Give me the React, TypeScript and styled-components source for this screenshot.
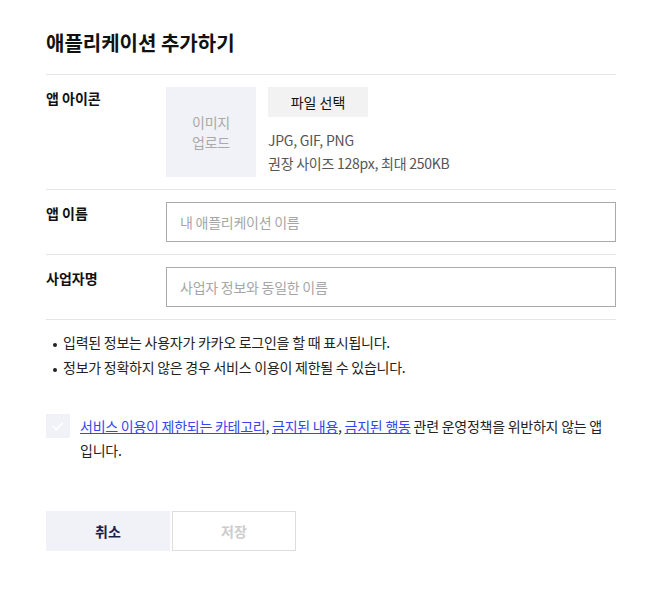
import * as React from "react"
import styled, { createGlobalStyle } from "styled-components"

const GlobalStyle = createGlobalStyle`
  body {
    margin: 0;
    background: #ffffff;
    font-family: "Noto Sans CJK KR", "Noto Sans", sans-serif;
    color: #222222;
    letter-spacing: -0.25px;
  }
`

const App = () => (
  <Wrapper>
    <GlobalStyle />
    <Title>애플리케이션 추가하기</Title>
    <Row>
      <Label>앱 아이콘</Label>
      <IconField>
        <ImageBox>
          이미지
          <br />
          업로드
        </ImageBox>
        <FileInfo>
          <FileButton>파일 선택</FileButton>
          <Hint>
            JPG, GIF, PNG
            <br />
            권장 사이즈 128px, 최대 250KB
          </Hint>
        </FileInfo>
      </IconField>
    </Row>
    <Row>
      <Label>앱 이름</Label>
      <TextInput placeholder="내 애플리케이션 이름" />
    </Row>
    <Row>
      <Label>사업자명</Label>
      <TextInput placeholder="사업자 정보와 동일한 이름" />
    </Row>
    <Notes>
      <li>입력된 정보는 사용자가 카카오 로그인을 할 때 표시됩니다.</li>
      <li>정보가 정확하지 않은 경우 서비스 이용이 제한될 수 있습니다.</li>
    </Notes>
    <Agree>
      <CheckBox>
        <svg width="12" height="10" viewBox="0 0 12 10">
          <path d="M1 5 L4.5 8.5 L11 1.5" fill="none" stroke="#ffffff" strokeWidth="1.6" />
        </svg>
      </CheckBox>
      <AgreeText>
        <Link href="#">서비스 이용이 제한되는 카테고리</Link>, <Link href="#">금지된 내용</Link>,{" "}
        <Link href="#">금지된 행동</Link> 관련 운영정책을 위반하지 않는 앱 입니다.
      </AgreeText>
    </Agree>
    <Buttons>
      <Button>취소</Button>
      <Button primary disabled>저장</Button>
    </Buttons>
  </Wrapper>
)

export default App

const Wrapper = styled.div`
  padding: 28px 48px 40px 46px;
`
const Title = styled.h1`
  margin: 0;
  font-size: 20px;
  line-height: 30px;
  font-weight: 700;
  letter-spacing: 0;
  color: #111111;
  padding-bottom: 16px;
  border-bottom: 1px solid #e5e5e5;
`
const Row = styled.div`
  display: flex;
  align-items: flex-start;
  padding: 12px 0;
  border-bottom: 1px solid #e5e5e5;
`
const Label = styled.div`
  width: 120px;
  flex-shrink: 0;
  font-size: 14px;
  line-height: 20px;
  font-weight: 700;
  letter-spacing: 0;
  color: #111111;
  padding-top: 1px;
`
const IconField = styled.div`
  display: flex;
  gap: 12px;
`
const ImageBox = styled.div`
  width: 90px;
  height: 90px;
  background: #f1f2f7;
  color: #a9a9a9;
  font-size: 14px;
  line-height: 20px;
  display: flex;
  align-items: center;
  justify-content: center;
  text-align: center;
`
const FileInfo = styled.div`
  display: flex;
  flex-direction: column;
  align-items: flex-start;
`
const FileButton = styled.button`
  width: 100px;
  height: 30px;
  border: none;
  background: #f2f2f2;
  font-family: inherit;
  font-size: 14px;
  font-weight: 400;
  color: #111111;
  padding: 0;
`
const Hint = styled.p`
  margin: 12px 0 0;
  font-size: 14px;
  line-height: 23px;
  color: #555555;
`
const TextInput = styled.input`
  flex: 1;
  height: 40px;
  box-sizing: border-box;
  border: 1px solid #aaaaaa;
  padding: 0 13px;
  font-family: inherit;
  font-size: 14px;
  letter-spacing: -0.25px;
  color: #222222;
  outline: none;
  &::placeholder {
    color: #a6a6a6;
  }
`
const Notes = styled.ul`
  margin: 10px 0 0;
  padding: 0;
  list-style: none;
  li {
    position: relative;
    padding-left: 17px;
    font-size: 14px;
    line-height: 25px;
    color: #222222;
  }
  li::before {
    content: "";
    position: absolute;
    left: 7px;
    top: 13px;
    width: 4px;
    height: 4px;
    border-radius: 50%;
    background: #222222;
  }
`
const Agree = styled.div`
  display: flex;
  align-items: flex-start;
  gap: 10px;
  margin-top: 34px;
`
const CheckBox = styled.span`
  width: 24px;
  height: 24px;
  flex-shrink: 0;
  background: #f1f2f7;
  display: flex;
  align-items: center;
  justify-content: center;
`
const AgreeText = styled.p`
  margin: 0;
  font-size: 14px;
  line-height: 24px;
  color: #222222;
`
const Link = styled.a`
  color: #3346f0;
  text-decoration: underline;
`
const Buttons = styled.div`
  display: flex;
  gap: 2px;
  margin-top: 49px;
`
const Button = styled.button<{ primary?: boolean }>`
  width: 124px;
  height: 40px;
  box-sizing: border-box;
  font-family: inherit;
  font-size: 14px;
  font-weight: 700;
  padding: 0;
  border: ${p => (p.primary ? "1px solid #dddddd" : "none")};
  background: ${p => (p.primary ? "#ffffff" : "#f1f2f7")};
  color: ${p => (p.primary ? "#cccccc" : "#1d1d4a")};
`
